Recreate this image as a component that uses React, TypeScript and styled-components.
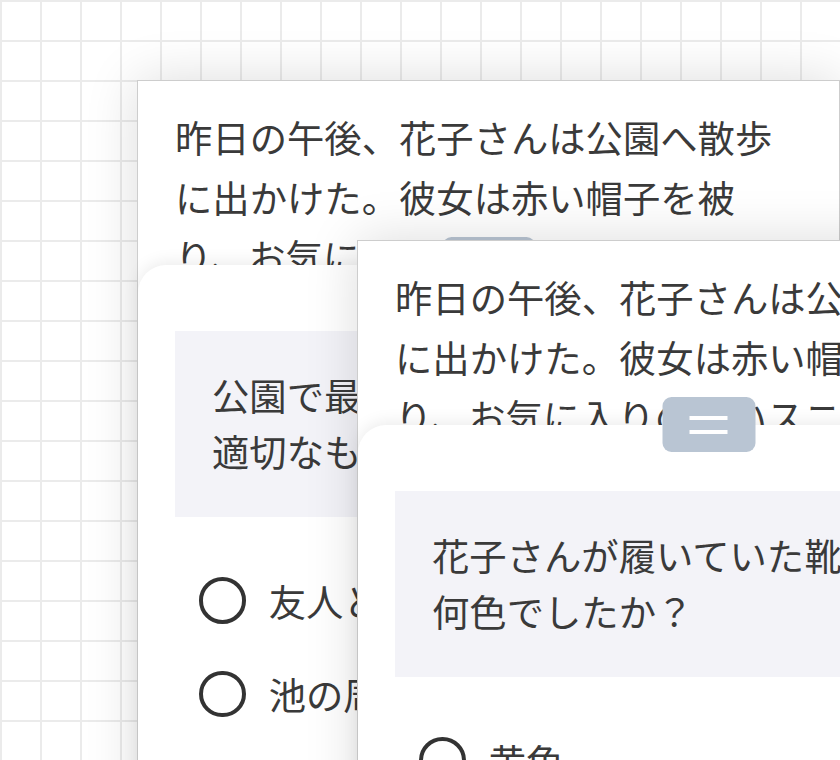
import React from "react";
import styled, { createGlobalStyle } from "styled-components";

const Global = createGlobalStyle`
  html, body { margin: 0; padding: 0; background: #fff; overflow: hidden; }
  body { font-family: "Noto Sans CJK JP", "Noto Sans", sans-serif; }
`;

const Canvas = styled.main`
  position: relative;
  width: 840px;
  height: 760px;
  overflow: hidden;
  background-color: #fff;
  background-image: linear-gradient(to right, #ebebeb 2px, transparent 2px),
    linear-gradient(to bottom, #ebebeb 2px, transparent 2px);
  background-size: 40px 40px;
`;

const Screen = styled.section<{ $x: number; $y: number }>`
  position: absolute;
  left: ${(p) => p.$x}px;
  top: ${(p) => p.$y}px;
  isolation: isolate;
  width: 703px;
  height: 900px;
  box-sizing: border-box;
  background: #fff;
  border: 1px solid #cdcdcd;
  box-shadow: 0 0 50px rgba(0, 0, 0, 0.14);
  display: flex;
  flex-direction: column;
`;

const Passage = styled.p`
  margin: 0;
  flex: none;
  height: 184px;
  box-sizing: border-box;
  padding: 27px 37px 0;
  font-size: 37.33px;
  line-height: 1.6;
  color: #3a3a3a;
`;

const Sheet = styled.div`
  position: relative;
  z-index: 1;
  flex: 1;
  background: #fff;
  border-radius: 28px 28px 0 0;
  box-shadow: 0 -3px 16px rgba(0, 0, 0, 0.08);
  padding: 66px 37px 0;
  display: flex;
  flex-direction: column;
`;

const Handle = styled.div`
  position: absolute;
  top: -28px;
  left: 50%;
  transform: translateX(-50%);
  width: 93px;
  height: 55px;
  border-radius: 9px;
  background: #b9c5d3;
  display: flex;
  flex-direction: column;
  align-items: center;
  justify-content: center;
  gap: 10px;
`;

const HandleBar = styled.span`
  display: block;
  width: 38px;
  height: 4px;
  background: #fff;
`;

const Question = styled.div`
  background: #f3f3f8;
  padding: 37px;
  font-size: 37.33px;
  line-height: 1.5;
  color: #3a3a3a;
`;

const Options = styled.ul`
  list-style: none;
  margin: 37px 0 0;
  padding: 0;
`;

const Option = styled.li`
  display: flex;
  align-items: center;
  gap: 23px;
  height: 93.33px;
  padding: 0 24px;
  font-size: 37.33px;
  color: #3a3a3a;
  white-space: nowrap;
`;

const Radio = styled.span`
  flex: none;
  width: 46.67px;
  height: 46.67px;
  box-sizing: border-box;
  border: 4.67px solid #333;
  border-radius: 50%;
`;

const passage =
  "昨日の午後、花子さんは公園へ散歩に出かけた。彼女は赤い帽子を被り、お気に入りの青いスニーカーを履いていた。";

type Item = {
  x: number;
  y: number;
  question: string[];
  options: string[];
};

const items: Item[] = [
  {
    x: 137,
    y: 80,
    question: ["公園で最初にしたこととして、", "適切なものはどれですか？"],
    options: ["友人とおしゃべりをした", "池の周りを散歩した", "ベンチで本を読んだ"],
  },
  {
    x: 357,
    y: 240,
    question: ["花子さんが履いていた靴は", "何色でしたか？"],
    options: ["黄色", "青色", "赤色"],
  },
];

export default function App() {
  return (
    <>
      <Global />
      <Canvas>
        {items.map((it, i) => (
          <Screen key={i} $x={it.x} $y={it.y}>
            <Passage>{passage}</Passage>
            <Sheet>
              <Handle>
                <HandleBar />
                <HandleBar />
              </Handle>
              <Question>
                {it.question[0]}
                <br />
                {it.question[1]}
              </Question>
              <Options>
                {it.options.map((o) => (
                  <Option key={o}>
                    <Radio />
                    {o}
                  </Option>
                ))}
              </Options>
            </Sheet>
          </Screen>
        ))}
      </Canvas>
    </>
  );
}
